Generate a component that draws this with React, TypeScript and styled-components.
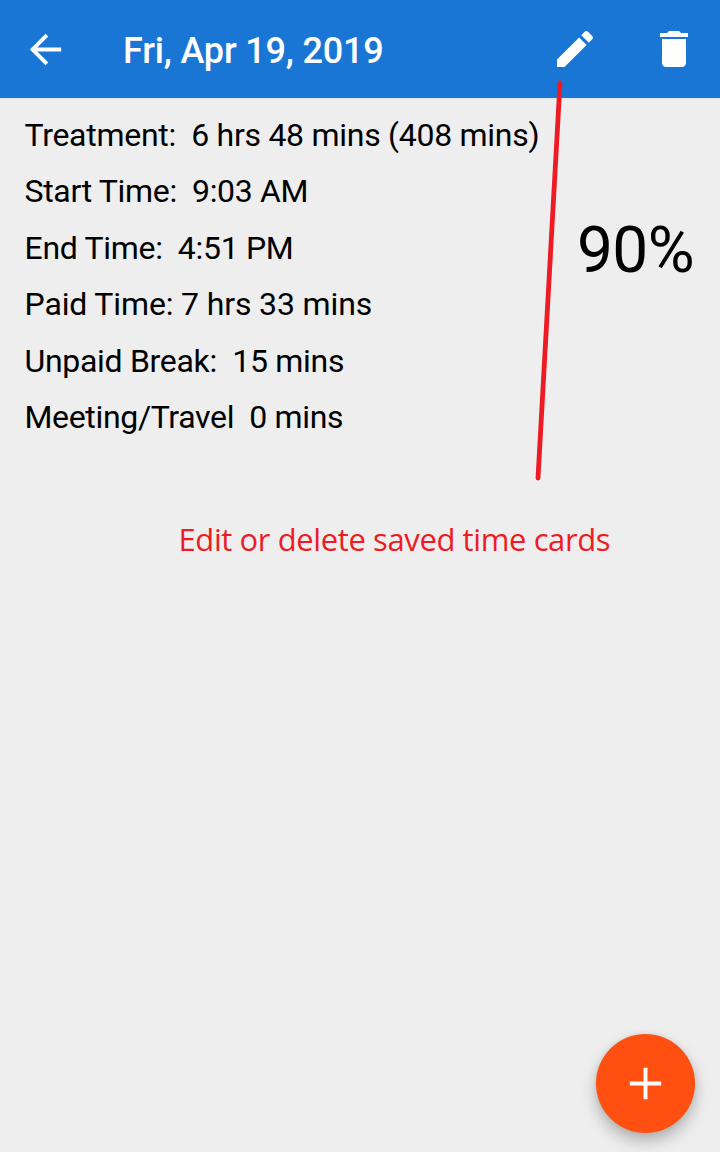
import React from 'react';
import styled, { createGlobalStyle } from 'styled-components';

const GlobalStyle = createGlobalStyle`
  * { box-sizing: border-box; }
  body { margin: 0; background: #eeeeee; font-family: Roboto, sans-serif; }
`;

const Screen = styled.div`
  position: relative;
  display: flex;
  flex-direction: column;
  height: 1152px;
  width: 720px;
  overflow: hidden;
  background: #eeeeee;
  color: #000;
`;

const AppBar = styled.header`
  display: flex;
  align-items: center;
  height: 98px;
  padding: 0 22px;
  background: #1976d5;
  color: #fff;
`;

const IconButton = styled.button<{ $gap?: number }>`
  display: flex;
  padding: 0;
  border: 0;
  background: none;
  color: inherit;
  margin-left: ${({ $gap = 0 }) => $gap}px;
`;

const Title = styled.h1`
  flex: 1;
  margin: 3px 0 0 54px;
  font-size: 36px;
  font-weight: 500;
  line-height: 44px;
  letter-spacing: -0.17px;
  white-space: pre;
`;

const Content = styled.main`
  display: flex;
  justify-content: space-between;
  padding: 7.75px 26px 0 24.5px;
  border-top: 1px solid #e3e6e9;
`;

const Details = styled.div`
  display: flex;
  flex-direction: column;
`;

const Row = styled.div<{ $tracking: number }>`
  height: 56.5px;
  line-height: 56.5px;
  font-size: 32px;
  letter-spacing: ${({ $tracking }) => $tracking}px;
  white-space: pre;
`;

const Percent = styled.div`
  margin-top: 105px;
  font-size: 64px;
  line-height: 78px;
  letter-spacing: -0.6px;
`;

const Caption = styled.p`
  margin: 72px 0 0 178.5px;
  font-family: 'Open Sans', 'Noto Sans', sans-serif;
  font-size: 31px;
  line-height: 42px;
  letter-spacing: -0.4px;
  color: #ed1c24;
  white-space: pre;
`;

const Pointer = styled.svg`
  position: absolute;
  left: 0;
  top: 0;
  pointer-events: none;
`;

const Fab = styled.button`
  position: absolute;
  right: 25px;
  bottom: 19px;
  display: flex;
  align-items: center;
  justify-content: center;
  width: 99px;
  height: 99px;
  padding: 0 1px 0 0;
  border: 0;
  border-radius: 50%;
  background: #ff5011;
  color: #fff;
  box-shadow: 0 8px 15px rgba(0, 0, 0, 0.26), 0 0 5px rgba(0, 0, 0, 0.08);
`;

const Icon = ({ d, size = 48 }: { d: string; size?: number }) => (
  <svg width={size} height={size} viewBox="0 0 24 24" fill="currentColor"><path d={d} /></svg>
);

const rows = [
  { text: 'Treatment:  6 hrs 48 mins (408 mins)', tracking: -0.28 },
  { text: 'Start Time:  9:03 AM', tracking: -0.33 },
  { text: 'End Time:  4:51 PM', tracking: -0.31 },
  { text: 'Paid Time: 7 hrs 33 mins', tracking: -0.14 },
  { text: 'Unpaid Break:  15 mins', tracking: -0.3 },
  { text: 'Meeting/Travel  0 mins', tracking: -0.34 },
];

export default function App() {
  return (
    <Screen>
      <GlobalStyle />
      <AppBar>
        <IconButton aria-label="Back">
          <Icon size={47} d="M20 11H7.83l5.59-5.59L12 4l-8 8 8 8 1.41-1.41L7.83 13H20v-2z" />
        </IconButton>
        <Title>Fri, Apr 19, 2019</Title>
        <IconButton aria-label="Edit">
          <Icon d="M3 17.25V21h3.75L17.81 9.94l-3.75-3.75L3 17.25zM20.71 7.04a1 1 0 0 0 0-1.41l-2.34-2.34a1 1 0 0 0-1.41 0l-1.83 1.83 3.75 3.75 1.83-1.83z" />
        </IconButton>
        <IconButton aria-label="Delete" $gap={51}>
          <Icon d="M6 19c0 1.1.9 2 2 2h8c1.1 0 2-.9 2-2V7H6v12zM19 4h-3.5l-1-1h-5l-1 1H5v2h14V4z" />
        </IconButton>
      </AppBar>
      <Content>
        <Details>
          {rows.map(({ text, tracking }) => (
            <Row key={text} $tracking={tracking}>{text}</Row>
          ))}
        </Details>
        <Percent>90%</Percent>
      </Content>
      <Caption>Edit or delete saved time cards</Caption>
      <Pointer width="720" height="500">
        <line x1="560" y1="83" x2="538" y2="478" stroke="#ed1c24" strokeWidth="4.8" strokeLinecap="round" />
      </Pointer>
      <Fab aria-label="Add">
        <Icon size={47} d="M20 13h-7v7h-2v-7H4v-2h7V4h2v7h7v2z" />
      </Fab>
    </Screen>
  );
}
